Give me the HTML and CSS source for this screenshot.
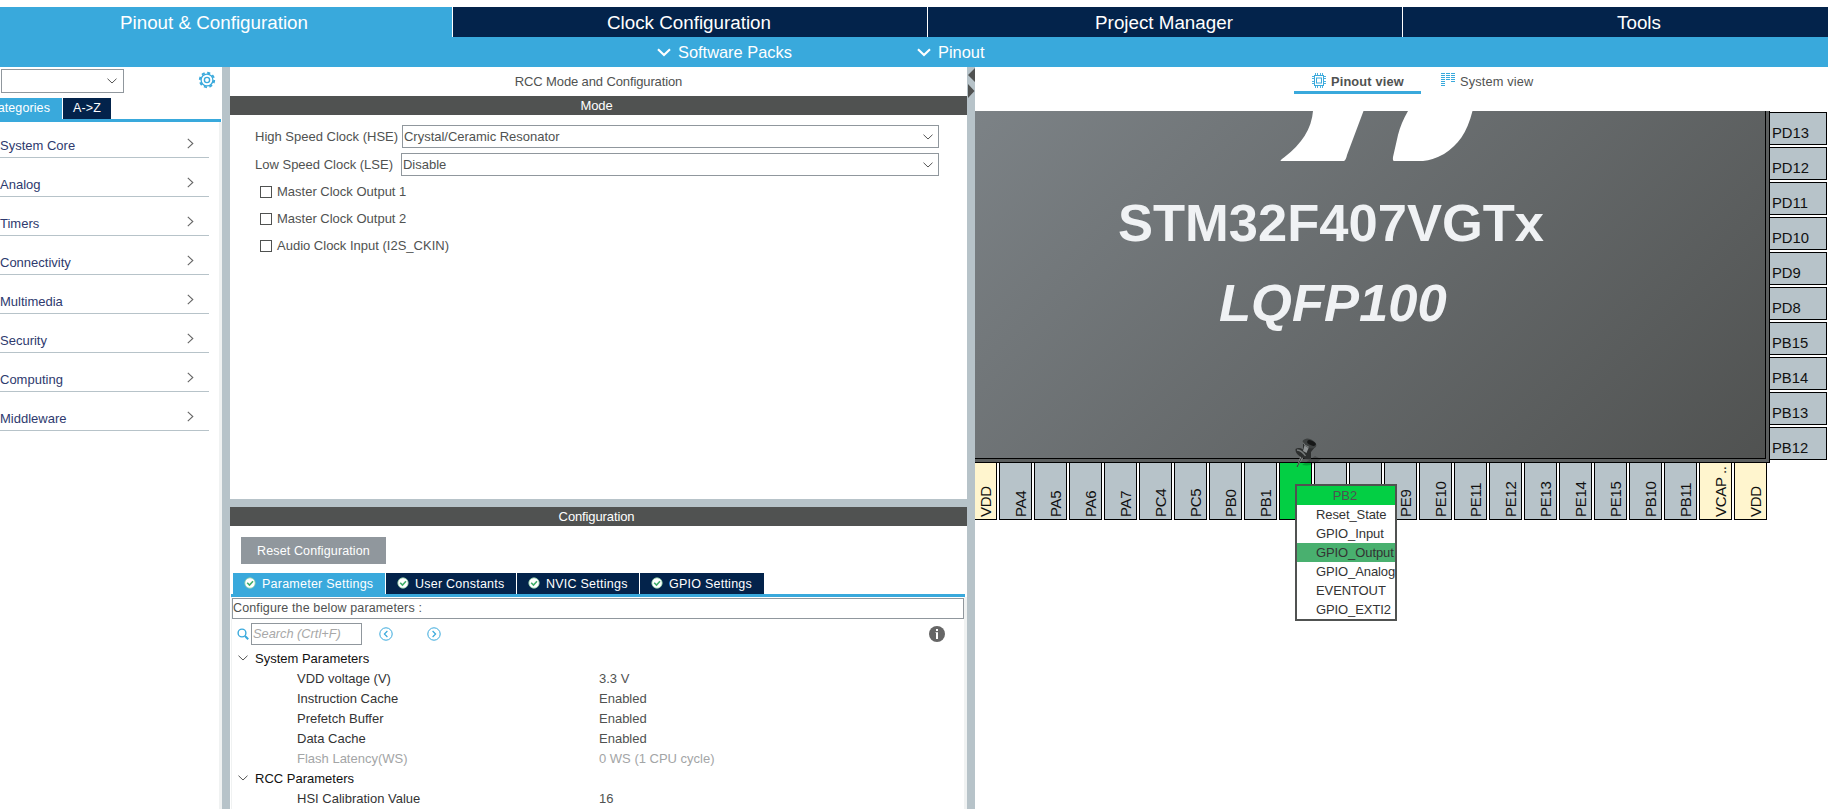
FILE: index.html
```html
<!DOCTYPE html>
<html lang="en">
<head>
    <meta charset="UTF-8">
    <meta name="viewport" content="width=device-width, initial-scale=1.0">
    <title>STM32CubeMX - Pinout &amp; Configuration</title>
    <link rel="stylesheet" href="styles.css">
</head>
<body>
    <!-- Shared icons -->
    <svg class="icon-defs" width="0" height="0">
        <symbol id="chevron-down" viewBox="0 0 10 6"><path d="M0.5 0.7L5 5L9.5 0.7" fill="none" stroke="currentColor"/></symbol>
        <symbol id="chevron-right" viewBox="0 0 7 11"><path d="M0.8 0.8L5.8 5.5L0.8 10.2" fill="none" stroke="currentColor" stroke-width="1.1"/></symbol>
        <symbol id="check" viewBox="0 0 12 12">
            <circle cx="6" cy="6" r="5.2" fill="#fff" stroke="#8fd0a8" stroke-width="0.8"/>
            <path d="M3.2 5.7L5.5 8L9 4.3" fill="none" stroke="#3fae6a" stroke-width="1.6"/>
        </symbol>
    </svg>

    <!-- Main navigation -->
    <nav class="main-tabs">
        <div class="main-tab active">Pinout &amp; Configuration</div>
        <div class="main-tab">Clock Configuration</div>
        <div class="main-tab">Project Manager</div>
        <div class="main-tab">Tools</div>
    </nav>
    <div class="sub-bar">
        <div class="sub-item packs">
            <svg width="14" height="9" viewBox="0 0 14 9"><path d="M1 1.3L7 7L13 1.3" fill="none" stroke="#fff" stroke-width="2.2"/></svg>
            Software Packs
        </div>
        <div class="sub-item">
            <svg width="14" height="9" viewBox="0 0 14 9"><path d="M1 1.3L7 7L13 1.3" fill="none" stroke="#fff" stroke-width="2.2"/></svg>
            Pinout
        </div>
    </div>

    <main class="workspace">
        <!-- Categories -->
        <aside class="sidebar">
            <div class="sidebar-top">
                <div class="combo filter-combo"><svg class="chev"><use href="#chevron-down"/></svg></div>
                <svg class="gear" width="18" height="18" viewBox="0 0 18 18" fill="none" stroke="#39a9dc">
                    <circle cx="9" cy="9" r="7.2" stroke-width="1.9" stroke-dasharray="3.1 2.55"/>
                    <circle cx="9" cy="9" r="5.9" stroke-width="1.3"/>
                    <circle cx="9" cy="9" r="2.6" stroke-width="1.4"/>
                </svg>
            </div>
            <div class="side-tabs">
                <div class="side-tab active"><span>Categories</span></div>
                <div class="side-tab az">A-&gt;Z</div>
            </div>
            <div class="category-list">
                <div class="category">System Core<svg><use href="#chevron-right"/></svg></div>
                <div class="category">Analog<svg><use href="#chevron-right"/></svg></div>
                <div class="category">Timers<svg><use href="#chevron-right"/></svg></div>
                <div class="category">Connectivity<svg><use href="#chevron-right"/></svg></div>
                <div class="category">Multimedia<svg><use href="#chevron-right"/></svg></div>
                <div class="category">Security<svg><use href="#chevron-right"/></svg></div>
                <div class="category">Computing<svg><use href="#chevron-right"/></svg></div>
                <div class="category">Middleware<svg><use href="#chevron-right"/></svg></div>
            </div>
        </aside>
        <div class="splitter"></div>

        <!-- RCC mode and configuration -->
        <section class="config-panel">
            <div class="panel-title">RCC Mode and Configuration</div>
            <div class="bar">Mode</div>
            <div class="mode-area">
                <div class="mode-row">
                    <label>High Speed Clock (HSE)</label>
                    <div class="combo hse">Crystal/Ceramic Resonator<svg class="chev"><use href="#chevron-down"/></svg></div>
                </div>
                <div class="mode-row">
                    <label>Low Speed Clock (LSE)</label>
                    <div class="combo lse">Disable<svg class="chev"><use href="#chevron-down"/></svg></div>
                </div>
                <div class="check-row"><span class="box"></span>Master Clock Output 1</div>
                <div class="check-row"><span class="box"></span>Master Clock Output 2</div>
                <div class="check-row"><span class="box"></span>Audio Clock Input (I2S_CKIN)</div>
            </div>
            <div class="h-splitter"></div>
            <div class="bar">Configuration</div>
            <div class="config-area">
                <button class="reset-btn" type="button">Reset Configuration</button>
                <div class="param-tabs">
                    <div class="param-tab active"><svg><use href="#check"/></svg>Parameter Settings</div>
                    <div class="param-tab user"><svg><use href="#check"/></svg>User Constants</div>
                    <div class="param-tab nvic"><svg><use href="#check"/></svg>NVIC Settings</div>
                    <div class="param-tab gpio"><svg><use href="#check"/></svg>GPIO Settings</div>
                </div>
                <div class="param-body">
                    <div class="param-hint">Configure the below parameters :</div>
                    <div class="search-row">
                        <svg class="magnifier" width="12" height="12" viewBox="0 0 12 12" fill="none" stroke="#39a9dc">
                            <circle cx="5" cy="5" r="3.9" stroke-width="1.4"/><path d="M8 8L11.2 11.2" stroke-width="2"/>
                        </svg>
                        <div class="search-box">Search (Crtl+F)</div>
                        <svg class="prev" width="14" height="14" viewBox="0 0 14 14" fill="none" stroke="#39a9dc">
                            <circle cx="7" cy="7" r="6.2"/><path d="M8.4 4L5.4 7L8.4 10" stroke-width="1.2"/>
                        </svg>
                        <svg class="next" width="14" height="14" viewBox="0 0 14 14" fill="none" stroke="#39a9dc">
                            <circle cx="7" cy="7" r="6.2"/><path d="M5.6 4L8.6 7L5.6 10" stroke-width="1.2"/>
                        </svg>
                        <svg class="info" width="16" height="16" viewBox="0 0 16 16">
                            <circle cx="8" cy="8" r="8" fill="#666"/><path d="M7 3h2v2H7zM6.5 6.3H9V13H7V7H6.5z" fill="#fff"/>
                        </svg>
                    </div>
                    <div class="tree">
                        <div class="group"><svg><use href="#chevron-down"/></svg>System Parameters</div>
                        <div class="param"><span>VDD voltage (V)</span><span>3.3 V</span></div>
                        <div class="param"><span>Instruction Cache</span><span>Enabled</span></div>
                        <div class="param"><span>Prefetch Buffer</span><span>Enabled</span></div>
                        <div class="param"><span>Data Cache</span><span>Enabled</span></div>
                        <div class="param disabled"><span>Flash Latency(WS)</span><span>0 WS (1 CPU cycle)</span></div>
                        <div class="group"><svg><use href="#chevron-down"/></svg>RCC Parameters</div>
                        <div class="param"><span>HSI Calibration Value</span><span>16</span></div>
                    </div>
                </div>
            </div>
        </section>
        <div class="splitter">
            <svg width="8" height="32" viewBox="0 0 8 32" fill="#505251"><path d="M8 1V15L1 8zM1 17V31L7.5 24z"/></svg>
        </div>

        <!-- Pinout view -->
        <section class="pinout-panel">
            <div class="view-tabs">
                <div class="view-tab active">
                    <svg width="14" height="15" viewBox="0 0 14 15" fill="none" stroke="#39a9dc">
                        <path d="M3.5 0V15M5.5 0V15M8.5 0V15M10.5 0V15M0 3.5H14M0 5.5H14M0 8.5H14M0 10.5H14" stroke-width="0.9"/>
                        <rect x="2.5" y="2.5" width="9" height="10" fill="#fff"/>
                        <rect x="4.5" y="5" width="5" height="5"/>
                    </svg>
                    Pinout view
                </div>
                <div class="view-tab">
                    <svg width="14" height="14" viewBox="0 0 14 14" fill="none" stroke="#39a9dc" stroke-width="1">
                        <path d="M0 .5H4M0 2.5H4M0 4.5H4M0 6.5H4M0 8.5H4M0 10.5H4M0 12.5H4M5 .5H9M5 2.5H9M5 4.5H9M5 6.5H9M10 .5H14M10 2.5H14M10 4.5H14M10 6.5H14M10 8.5H14"/>
                    </svg>
                    System view
                </div>
            </div>
            <div class="package">
                <div class="chip">
                    <div class="chip-face">
                        <svg class="st-logo" width="200" height="50" viewBox="0 0 200 50" fill="#fff">
                            <path d="M36 0H86.500L70 44Q69 49 67 50H4Q2 50 7 46.500Q34 26 36 0zM131 0H195.500C190 22 181 34 167 43Q156 49 146 50H117Q115.500 50 116 46L121 24Q124 12 131 0z"/>
                        </svg>
                        <div class="chip-name">STM32F407VGTx</div>
                        <div class="chip-case">LQFP100</div>
                    </div>
                </div>
                <div class="pins-right">
                    <div class="pin">PD13</div>
                    <div class="pin">PD12</div>
                    <div class="pin">PD11</div>
                    <div class="pin">PD10</div>
                    <div class="pin">PD9</div>
                    <div class="pin">PD8</div>
                    <div class="pin">PB15</div>
                    <div class="pin">PB14</div>
                    <div class="pin">PB13</div>
                    <div class="pin">PB12</div>
                </div>
            </div>
            <div class="pins-bottom">
                <div class="pin power"><span>VDD</span></div>
                <div class="pin"><span>PA4</span></div>
                <div class="pin"><span>PA5</span></div>
                <div class="pin"><span>PA6</span></div>
                <div class="pin"><span>PA7</span></div>
                <div class="pin"><span>PC4</span></div>
                <div class="pin"><span>PC5</span></div>
                <div class="pin"><span>PB0</span></div>
                <div class="pin"><span>PB1</span></div>
                <div class="pin selected"></div>
                <div class="pin"></div>
                <div class="pin"></div>
                <div class="pin"><span>PE9</span></div>
                <div class="pin"><span>PE10</span></div>
                <div class="pin"><span>PE11</span></div>
                <div class="pin"><span>PE12</span></div>
                <div class="pin"><span>PE13</span></div>
                <div class="pin"><span>PE14</span></div>
                <div class="pin"><span>PE15</span></div>
                <div class="pin"><span>PB10</span></div>
                <div class="pin"><span>PB11</span></div>
                <div class="pin power"><span>VCAP<i class="dots">..</i></span></div>
                <div class="pin power"><span>VDD</span></div>
            </div>

            <!-- Push pin on PB2 -->
            <svg class="push-pin" width="30" height="34" viewBox="0 0 30 34">
                <path d="M7 28L20 19L26 22Q19 30 7 28z" fill="#000" opacity=".2"/>
                <path d="M5.500 19L1.500 30.500L9 20z" fill="#8b8e8e"/>
                <path d="M6.800 20L2 30" stroke="#3a3a3a" stroke-width="1" fill="none"/>
                <path d="M8 5L20 10L16 15L16 22Q10 23 5 19.500Q0 16 0.500 12Q4 10 8 12.500z" fill="#2d2f2f"/>
                <path d="M9.500 8L14 10L11.500 16L8 14z" fill="#8d9192"/>
                <path d="M2 13Q7 13.500 10.500 19" stroke="#777b7b" stroke-width="1.300" fill="none"/>
                <ellipse cx="14.500" cy="6.500" rx="7.200" ry="4.300" transform="rotate(24 14.500 6.500)" fill="#3d4040"/>
                <ellipse cx="16.500" cy="6" rx="4.600" ry="2.300" transform="rotate(24 16.500 6)" fill="#171818"/>
                <path d="M8 5.500Q9 8.500 14 10.200" stroke="#777b7b" fill="none"/>
            </svg>

            <!-- Pin function menu -->
            <div class="pin-menu">
                <div class="menu-title">PB2</div>
                <div class="menu-item">Reset_State</div>
                <div class="menu-item">GPIO_Input</div>
                <div class="menu-item current">GPIO_Output</div>
                <div class="menu-item">GPIO_Analog</div>
                <div class="menu-item">EVENTOUT</div>
                <div class="menu-item">GPIO_EXTI2</div>
            </div>
        </section>
    </main>
</body>
</html>
```
FILE: styles.css
```css
* {
    box-sizing: border-box;
}

body {
    margin: 0;
    padding-top: 7px;
    height: 809px;
    overflow: hidden;
    display: flex;
    flex-direction: column;
    background: #fff;
    font-family: "Liberation Sans", Arial, sans-serif;
    font-size: 13px;
    color: #505251;
}

svg {
    display: block;
    flex: none;
}

.icon-defs {
    position: absolute;
}

/* Main navigation */
.main-tabs {
    display: flex;
    flex: none;
    gap: 1px;
    height: 30px;
    margin-left: -22px;
}

.main-tab {
    flex: none;
    width: 474px;
    line-height: 31px;
    padding-right: 2px;
    text-align: center;
    font-size: 18.8px;
    color: #fff;
    background: #03234b;
}

.main-tab.active {
    background: #39a9dc;
}

.sub-bar {
    display: flex;
    flex: none;
    height: 30px;
    padding-left: 657px;
    background: #39a9dc;
    color: #fff;
    font-size: 16.4px;
}

.sub-item {
    display: flex;
    align-items: center;
    gap: 7px;
}

.sub-item.packs {
    width: 260px;
}

/* Workspace columns */
.workspace {
    display: flex;
    flex: 1;
    min-height: 0;
}

.splitter {
    flex: none;
    width: 8px;
    background: #b7c3c9;
}

/* Sidebar */
.sidebar {
    flex: none;
    width: 222px;
    display: flex;
    flex-direction: column;
}

.sidebar-top {
    display: flex;
    padding: 2px 0 0 1px;
    height: 31px;
}

.combo {
    display: flex;
    align-items: center;
    justify-content: space-between;
    height: 23px;
    padding: 0 5px 0 1px;
    border: 1px solid #90979d;
    letter-spacing: -0.02px;
}

.chev {
    width: 10px;
    height: 6px;
    color: #555;
}

.filter-combo {
    width: 123px;
    height: 24px;
    padding-right: 6px;
    justify-content: flex-end;
}

.gear {
    margin: 2px 0 0 74px;
}

.side-tabs {
    display: flex;
    gap: 1px;
    width: 221px;
    height: 24px;
    border-bottom: 3px solid #39a9dc;
}

.side-tab {
    height: 21px;
    line-height: 21px;
    background: #03234b;
    color: #fff;
    font-size: 12.5px;
    letter-spacing: 0.1px;
}

.side-tab.active {
    display: flex;
    justify-content: flex-end;
    width: 62px;
    padding-right: 12px;
    overflow: hidden;
    background: #39a9dc;
}

.side-tab.az {
    width: 48px;
    text-align: center;
}

.category-list {
    flex: 1;
    padding-right: 10px;
    border-right: 3px solid #f0f2f2;
}

.category {
    display: flex;
    align-items: flex-end;
    justify-content: space-between;
    height: 39px;
    padding: 0 15px 4px 0;
    line-height: 15px;
    border-bottom: 1px solid #b7c3c9;
    color: #2e3a6e;
}

.category:first-child {
    height: 36px;
}

.category svg {
    width: 7px;
    height: 11px;
    margin-bottom: 4px;
    color: #666;
}

/* Middle panel */
.config-panel {
    flex: none;
    width: 737px;
    display: flex;
    flex-direction: column;
}

.panel-title {
    height: 29px;
    line-height: 29px;
    text-align: center;
    letter-spacing: -0.12px;
}

.bar {
    height: 19px;
    line-height: 19px;
    padding-right: 4px;
    text-align: center;
    letter-spacing: -0.12px;
    color: #fff;
    background: #505251;
}

.mode-area {
    height: 384px;
    padding: 10px 28px 0 25px;
}

.mode-row {
    display: flex;
    align-items: center;
    justify-content: space-between;
    margin-bottom: 5px;
}

.combo.hse {
    width: 537px;
}

.combo.lse {
    width: 538px;
}

.check-row {
    display: flex;
    align-items: center;
    gap: 5px;
    height: 27px;
    padding-left: 5px;
}

.mode-row + .check-row {
    margin-top: -3px;
}

.box {
    width: 12px;
    height: 12px;
    border: 1px solid #505251;
    margin-top: 1px;
}

.h-splitter {
    flex: none;
    height: 8px;
    background: #b7c3c9;
}

.config-area {
    flex: 1;
    display: flex;
    flex-direction: column;
    padding: 11px 0 0 1px;
}

.reset-btn {
    flex: none;
    width: 145px;
    height: 27px;
    margin-left: 10px;
    padding: 0;
    border: none;
    background: #90979d;
    color: #fff;
    font-family: inherit;
    font-size: 12.5px;
    letter-spacing: 0.12px;
}

.param-tabs {
    display: flex;
    flex: none;
    gap: 1px;
    width: 734px;
    height: 24px;
    margin-top: 9px;
    padding-left: 2px;
    border-bottom: 3px solid #39a9dc;
}

.param-tab {
    display: flex;
    align-items: center;
    gap: 6px;
    height: 21px;
    padding-left: 11px;
    background: #03234b;
    color: #fff;
    font-size: 12.5px;
    letter-spacing: 0.24px;
    white-space: nowrap;
}

.param-tab.active {
    width: 152px;
    background: #39a9dc;
}

.param-tab.user {
    width: 130px;
}

.param-tab.nvic {
    width: 122px;
}

.param-tab.gpio {
    width: 124px;
}

.param-tab svg {
    width: 12px;
    height: 12px;
    margin-bottom: 1px;
}

.param-body {
    flex: 1;
    min-height: 0;
    border-left: 1px solid #f0f2f2;
    border-right: 3px solid #f0f2f2;
    padding-top: 1px;
}

.param-hint {
    height: 21px;
    line-height: 19px;
    border: 1px solid #90979d;
    font-size: 12.5px;
    letter-spacing: 0.13px;
}

.search-row {
    display: flex;
    align-items: center;
    height: 29px;
    padding: 1px 19px 0 5px;
}

.search-box {
    width: 111px;
    height: 22px;
    line-height: 20px;
    margin-left: 2px;
    padding-left: 1px;
    border: 1px solid #90979d;
    font-size: 12.8px;
    font-style: italic;
    color: #a8a8a8;
}

.prev {
    margin-left: 17px;
}

.next {
    margin-left: 34px;
}

.info {
    margin-left: auto;
}

.group,
.param {
    display: flex;
    align-items: center;
    height: 20px;
}

.group {
    gap: 7px;
    padding-left: 6px;
    color: #111;
}

.group svg {
    width: 10px;
    height: 6px;
    color: #555;
}

.param span:first-child {
    width: 302px;
    margin-left: 65px;
    color: #333;
}

.param.disabled,
.param.disabled span:first-child {
    color: #a3a5a6;
}

/* Pinout panel */
.pinout-panel {
    flex: 1;
    min-width: 0;
    position: relative;
    overflow: hidden;
}

.view-tabs {
    display: flex;
    gap: 8px;
    height: 44px;
    padding-left: 319px;
}

.view-tab {
    display: flex;
    align-items: center;
    gap: 5px;
    height: 27px;
    padding: 4px 12px 0;
    font-size: 12.8px;
    letter-spacing: 0.15px;
    border-bottom: 3px solid transparent;
}

.view-tab svg {
    margin-bottom: 2px;
}

.view-tab.active {
    width: 127px;
    padding-left: 18px;
    padding-right: 0;
    font-weight: bold;
    border-bottom-color: #39a9dc;
}

.package {
    display: flex;
}

.chip {
    width: 795px;
    height: 352px;
    padding: 0 3px 3px 0;
    border-right: 1px solid #000;
    border-bottom: 1px solid #000;
    background: #5b5e5e;
}

.chip-face {
    height: 348px;
    display: flex;
    flex-direction: column;
    border-right: 1px solid #000;
    border-bottom: 1px solid #000;
    background: linear-gradient(135deg, #7c8286 0%, #505251 100%);
    color: #f0f2f4;
    font-size: 52.5px;
    font-weight: bold;
    white-space: nowrap;
}

.st-logo {
    margin-left: 302px;
}

.chip-name {
    margin: 32px 0 0 143px;
    line-height: 60px;
}

.chip-case {
    margin: 20px 0 0 244px;
    line-height: 60px;
    font-style: italic;
}

.pin {
    background: #b7c3c9;
    border: 1px solid #000;
    color: #111;
    font-size: 14.8px;
}

.pin.power {
    background: #fff5ce;
}

.pin.selected {
    background: #03cf44;
}

.pins-right {
    display: flex;
    flex-direction: column;
    gap: 2px;
    padding-top: 1px;
}

.pins-right .pin {
    width: 57px;
    height: 33px;
    padding: 9px 0 0 2px;
    line-height: 22px;
    border-left: none;
}

.pins-bottom {
    display: flex;
    gap: 2px;
    margin-left: -11px;
}

.pins-bottom .pin {
    flex: none;
    display: flex;
    width: 33px;
    height: 57px;
    border-top: none;
    font-size: 15px;
    letter-spacing: -0.3px;
}

.pins-bottom .pin span {
    writing-mode: vertical-rl;
    transform: rotate(180deg);
    width: 22px;
    margin-left: 10px;
    padding-top: 2px;
    line-height: 22px;
}

.dots {
    display: inline-block;
    margin-top: 3px;
    font-style: normal;
}

/* Overlays on the package */
.push-pin {
    position: absolute;
    left: 320px;
    top: 370px;
}

.pin-menu {
    position: absolute;
    left: 320px;
    top: 417px;
    width: 102px;
    border: 2px solid #505251;
    background: #fff;
    overflow: hidden;
}

.menu-title,
.menu-item {
    height: 19px;
    line-height: 19px;
}

.menu-title {
    padding-right: 2px;
    text-align: center;
    background: #03cf44;
}

.menu-item {
    padding-left: 19px;
    color: #333;
    letter-spacing: -0.1px;
}

.menu-item.current {
    background: #49b06f;
}
```
